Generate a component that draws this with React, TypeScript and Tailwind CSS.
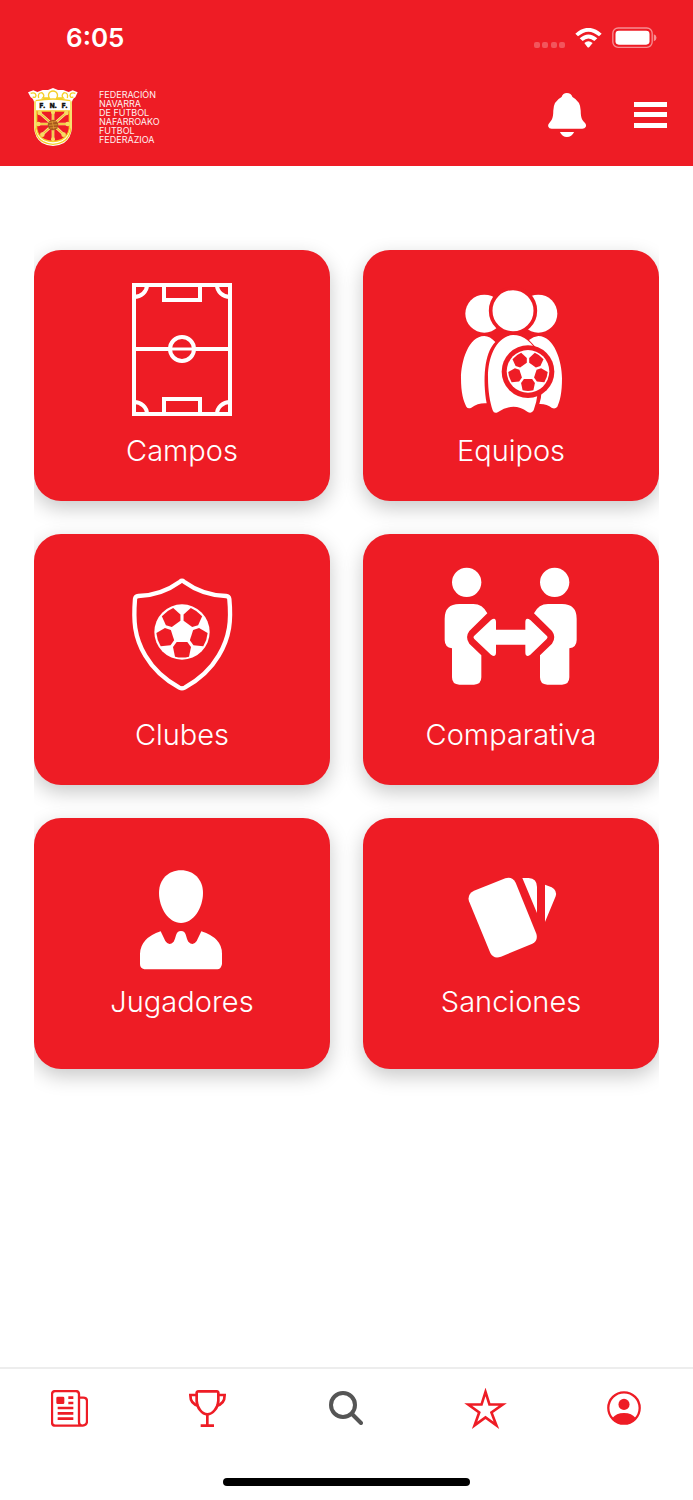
import { PropsWithChildren, ReactNode } from 'react';
import { twMerge } from 'tailwind-merge';

type IconProps = PropsWithChildren<{
  viewBox: string;
  className?: string;
}>;

function Icon({ viewBox, className = '', children }: IconProps) {
  return (
    <svg
      viewBox={viewBox}
      fill="currentColor"
      aria-hidden="true"
      className={twMerge('block shrink-0', className)}
    >
      {children}
    </svg>
  );
}

// Football centred on the origin, radius 83
function Ball({ transform }: { transform: string }) {
  return (
    <g transform={transform}>
      <circle r="83" fill="#fff" />
      {[0, 72, 144, 216, 288].map((angle) => (
        <path
          key={angle}
          d="M-16 30H16L27 45L21 74Q0 79 -21 74L-27 45Z"
          fill="#ee1c25"
          transform={`rotate(${angle})`}
        />
      ))}
    </g>
  );
}

function PitchIcon() {
  return (
    <Icon viewBox="0 0 134 134" className="size-[134px]">
      <g fill="none" stroke="currentColor" strokeWidth="4">
        <path d="M19 2H115V131H19ZM19 66H55M79 66H115" />
        <path d="M55 66H79" strokeWidth="3" />
        <circle cx="67" cy="66" r="12" />
        <path d="M49 2V17H85V2M49 131V116H85V131" />
        <path d="M32 2A13 12 0 0 1 19 14M102 2A13 12 0 0 0 115 14M32 131A13 12 0 0 0 19 119M102 131A13 12 0 0 1 115 119" />
      </g>
    </Icon>
  );
}

function TeamIcon() {
  return (
    <Icon viewBox="12 39 402 402" className="size-[134px]">
      <circle cx="133" cy="131" r="57" />
      <circle cx="295" cy="131" r="57" />
      <circle cx="219" cy="122" r="67" stroke="#ee1c25" strokeWidth="11" />
      <path d="M133 198C85 198 63 275 63 325C63 368 70 393 79 410Q84 418 94 413Q115 398 140 400C128 330 132 250 166 216Q150 198 133 198Z" />
      <path d="M295 198C343 198 366 275 366 325C366 368 360 393 352 410Q346 418 336 414Q320 401 298 402Q304 385 304 370V250L267 210Q280 199 295 198Z" />
      <path d="M219 195C170 198 144 260 144 320C144 365 150 395 158 421Q162 432 173 427Q220 395 262 425Q274 433 281 421Q290 397 293 370L300 260Q267 195 219 195Z" />
      <circle cx="264" cy="305" r="79" fill="#ee1c25" />
      <Ball transform="translate(264 304) scale(.77)" />
    </Icon>
  );
}

function ShieldIcon() {
  return (
    <Icon viewBox="15 21 402 402" className="size-[134px]">
      <path
        d="M210 65Q216 60 222 65C255 89 295 106 348 108Q357 109 358 117C364 180 360 230 326 287C298 335 262 362 224 383Q216 387 208 383C170 362 134 335 106 287C72 230 70 180 75 117Q76 109 85 108C138 106 177 89 210 65Z"
        fill="none"
        stroke="currentColor"
        strokeWidth="13"
        strokeLinejoin="round"
      />
      <Ball transform="translate(216 216)" />
    </Icon>
  );
}

function CompareIcon() {
  const person =
    'M118 162H160Q188 162 202 190L148 243Q134 262 148 281L184 316V382Q184 404 162 404H118Q96 404 96 382V295Q74 292 74 270V206Q74 162 118 162Z';
  return (
    <Icon viewBox="72 51 402 402" className="size-[134px]">
      <circle cx="140" cy="97" r="44" />
      <circle cx="404" cy="97" r="44" />
      <path d={person} />
      <path d={person} transform="translate(544 0) scale(-1 1)" />
      <path d="M163 257L213 210Q228 200 228 217V239H316V217Q316 200 331 210L380 257Q385 262 380 267L331 314Q316 324 316 307V284H228V307Q228 324 213 314L163 267Q158 262 163 257Z" />
    </Icon>
  );
}

function PlayerIcon() {
  return (
    <Icon viewBox="96 55 300 300" className="size-25 overflow-visible">
      <path d="M243 62C282 62 309 90 309 130C309 175 280 220 243 220C206 220 177 175 177 130C177 90 204 62 243 62Z" />
      <path d="M182 245L196 274Q207 291 221 276C229 264 226 244 243 244C260 244 257 264 265 276Q279 291 290 274L304 245Q366 265 366 312V343Q363 359 352 359H133Q120 356 120 343V312Q122 265 182 245Z" />
    </Icon>
  );
}

function CardsIcon() {
  return (
    <Icon viewBox="63 25 300 300" className="size-25">
      <path d="M102 93L196 56Q217 50 227 69L289 222Q295 243 277 252L183 291Q161 299 151 280L87 125Q81 104 102 93Z" />
      <path d="M247 55H266Q291 57 291 82V160ZM315 75L335 83Q352 93 347 110L315 187Z" />
    </Icon>
  );
}

function Crest() {
  return (
    <Icon viewBox="84 54 150 177" className="h-[59px] w-[50px]">
      <path
        d="M84 67L100 61L112 66L128 60H144L159 54L174 60H190L206 66L218 61L233 67L226 82Q214 88 216 105V172Q214 204 192 219Q159 237 126 219Q104 204 102 172V105Q104 88 92 82Z"
        fill="#fff"
      />
      <g fill="none" stroke="#f5cf28" strokeWidth="4">
        <path d="M92 70Q106 66 108 76Q106 86 98 80M226 70Q212 66 210 76Q212 86 220 80M116 84Q112 68 126 68Q136 76 128 84H148Q142 74 150 66Q159 60 168 66Q176 74 170 84H190Q182 76 192 68Q206 68 202 84M107 92Q159 82 211 92" />
        <path d="M105 94V172Q107 202 129 215Q159 231 189 215Q211 202 213 172V94" />
      </g>
      <g
        fill="#111"
        stroke="#111"
        textAnchor="middle"
        className="font-['Inter',sans-serif] text-[19px] font-black"
      >
        <text x="127" y="114">F.</text>
        <text x="160" y="114">N.</text>
        <text x="194" y="114">F.</text>
      </g>
      <path d="M108 121H210V176Q207 198 186 211Q159 223 132 211Q111 198 108 176Z" fill="#f5cf28" />
      <path d="M112 125H206V176Q203 196 184 207Q159 218 134 207Q115 196 112 176Z" fill="#ee1c25" />
      <path
        d="M119 129L159 164L199 129M115 162H203M159 125V210M126 194L159 164L192 194"
        fill="none"
        stroke="#fbe9a0"
        strokeWidth="8"
      />
      <path
        d="M119 129L159 164L199 129M115 162H203M159 125V210M126 194L159 164L192 194"
        fill="none"
        stroke="#efc02c"
        strokeWidth="4"
      />
      <g fill="#f7dc62">
        <circle cx="119" cy="129" r="7" />
        <circle cx="159" cy="127" r="6" />
        <circle cx="199" cy="129" r="7" />
        <circle cx="115" cy="162" r="7" />
        <circle cx="203" cy="162" r="7" />
        <circle cx="127" cy="194" r="7" />
        <circle cx="191" cy="194" r="7" />
        <circle cx="159" cy="208" r="6" />
      </g>
      <circle cx="159" cy="165" r="16" fill="#a8591c" />
      <path d="M147 158L170 154M147 166L172 164M150 174L170 172M156 152L162 178" stroke="#e8a43a" strokeWidth="2" />
    </Icon>
  );
}

function StatusBar() {
  return (
    <div className="flex h-19 items-center justify-between pr-9 pl-[66px]">
      <span className="text-[26px] leading-8 font-semibold">6:05</span>
      <div className="flex items-center gap-[10px]">
        <Icon viewBox="0 0 31 22" className="h-[22px] w-[31px] opacity-25">
          <rect x="0" y="15" width="6" height="6" rx="2" />
          <rect x="8" y="15" width="6" height="6" rx="2" />
          <rect x="17" y="15" width="6" height="6" rx="2" />
          <rect x="25" y="15" width="6" height="6" rx="2" />
        </Icon>
        <Icon viewBox="226 84 81 63" className="h-[21px] w-[27px]">
          <path d="M227 101Q266 66 306 101L298 109Q266 81 235 109ZM240 115Q266 92 293 115L284 123Q266 108 249 123ZM254 129Q266 119 279 129L269 141Q266 144 263 141Z" />
        </Icon>
        <Icon viewBox="337 84 134 63" className="h-[21px] w-[45px] overflow-visible">
          <rect x="339" y="84" width="118" height="58" rx="16" fill="none" stroke="currentColor" strokeWidth="4" opacity=".5" />
          <rect x="347" y="92" width="102" height="42" rx="10" />
          <path d="M462 103Q470 106 470 113Q470 121 462 124Z" opacity=".5" />
        </Icon>
      </div>
    </div>
  );
}

function AppBar() {
  return (
    <div className="flex h-[90px] items-center justify-between pr-[26px] pb-3 pl-7">
      <a href="#inicio" className="flex items-center gap-[21px] pt-1">
        <Crest />
        <span className="text-[9px] leading-[9px] text-red-50">
          FEDERACIÓN
          <br />
          NAVARRA
          <br />
          DE FÚTBOL
          <br />
          NAFARROAKO
          <br />
          FUTBOL
          <br />
          FEDERAZIOA
        </span>
      </a>
      <div className="flex items-center gap-12">
        <button type="button" aria-label="Notificaciones">
          <Icon viewBox="143 279 115 133" className="h-11 w-[38px]">
            <path d="M200 279Q213 279 217 291Q242 304 242 333C242 356 247 362 255 370Q260 376 257 382Q254 387 247 387H154Q146 387 144 381Q142 375 147 370C154 362 159 356 159 333Q159 304 184 291Q188 279 200 279Z" />
            <path d="M179 397H222Q215 412 200 412Q186 412 179 397Z" />
          </Icon>
        </button>
        <button type="button" aria-label="Menú">
          <Icon viewBox="0 0 33 26" className="h-[26px] w-[33px]">
            <path d="M0 0H33V5H0ZM0 10H33V15H0ZM0 21H33V26H0Z" />
          </Icon>
        </button>
      </div>
    </div>
  );
}

type TileProps = {
  label: string;
  href: string;
  icon: ReactNode;
};

const tiles: TileProps[] = [
  { label: 'Campos', href: '#campos', icon: <PitchIcon /> },
  { label: 'Equipos', href: '#equipos', icon: <TeamIcon /> },
  { label: 'Clubes', href: '#clubes', icon: <ShieldIcon /> },
  { label: 'Comparativa', href: '#comparativa', icon: <CompareIcon /> },
  { label: 'Jugadores', href: '#jugadores', icon: <PlayerIcon /> },
  { label: 'Sanciones', href: '#sanciones', icon: <CardsIcon /> },
];

function Tile({ label, href, icon }: TileProps) {
  return (
    <a
      href={href}
      className="flex h-[251px] flex-col items-center justify-center gap-4 rounded-[27px] bg-[#ee1c25] text-white shadow-[0_7px_20px_rgba(0,0,0,0.22)]"
    >
      {icon}
      <span className="text-[29px] leading-9 font-light">{label}</span>
    </a>
  );
}

const tabs = [
  {
    label: 'Noticias',
    href: '#noticias',
    icon: (
      <Icon viewBox="152 90 111 111" className="size-[37px]">
        <path
          d="M243 197H165Q155 197 155 187V103Q155 93 165 93H226Q236 93 236 103V187Q236 197 247 197Q260 195 260 184V124Q260 113 249 113H236"
          fill="none"
          stroke="currentColor"
          strokeWidth="7"
        />
        <rect x="168" y="110" width="24" height="22" rx="4" />
        <path d="M204 113H219M204 129H219M172 144H219M172 160H219M172 176H219" stroke="currentColor" strokeWidth="8" />
      </Icon>
    ),
  },
  {
    label: 'Competiciones',
    href: '#competiciones',
    icon: (
      <Icon viewBox="567 90 111 111" className="size-[37px]">
        <g fill="none" stroke="currentColor" strokeWidth="8">
          <path d="M596 94H650Q656 94 655 101V122C655 142 638 163 622 163C606 163 590 142 590 122V101Q589 94 596 94Z" />
          <path d="M589 105H571Q571 132 595 137M655 105H674Q674 132 650 137M622 162V197M602 197H642" />
        </g>
      </Icon>
    ),
  },
  {
    label: 'Buscar',
    href: '#buscar',
    active: true,
    icon: (
      <Icon viewBox="0 0 34 34" className="size-[34px]">
        <g fill="none" stroke="currentColor" strokeWidth="4" strokeLinecap="round">
          <circle cx="14" cy="14" r="12" />
          <path d="M23 23L32 32" />
        </g>
      </Icon>
    ),
  },
  {
    label: 'Favoritos',
    href: '#favoritos',
    icon: (
      <Icon viewBox="370 82 128 124" className="h-[41px] w-[43px]">
        <path
          d="M434 94L446 132H486L452 156L467 195L434 171L401 195L415 156L382 132H422Z"
          fill="none"
          stroke="currentColor"
          strokeWidth="8"
          strokeMiterlimit="10"
        />
      </Icon>
    ),
  },
  {
    label: 'Perfil',
    href: '#perfil',
    icon: (
      <Icon viewBox="798 93 104 104" className="size-[34px]">
        <circle cx="850" cy="145" r="48" fill="none" stroke="currentColor" strokeWidth="7" />
        <circle cx="850" cy="134" r="17" />
        <path d="M814 176Q826 160 850 160Q874 160 886 176Q872 194 850 194Q828 194 814 176Z" />
      </Icon>
    ),
  },
];

function TabBar() {
  return (
    <footer className="border-t-2 border-[#ededed] bg-white">
      <nav className="grid h-[78px] grid-cols-5">
        {tabs.map((tab) => (
          <a
            key={tab.label}
            href={tab.href}
            aria-label={tab.label}
            className={twMerge(
              'flex items-center justify-center text-[#ee1c25]',
              tab.active && 'text-[#555555]',
            )}
          >
            {tab.icon}
          </a>
        ))}
      </nav>
      <div className="flex justify-center pt-[31px] pb-[14px]">
        <div className="h-2 w-[247px] rounded-full bg-black" />
      </div>
    </footer>
  );
}

export default function App() {
  return (
    <div className="flex min-h-screen flex-col bg-white font-['Inter','Liberation_Sans',sans-serif]">
      <header className="bg-[#ee1c25] text-white">
        <StatusBar />
        <AppBar />
      </header>
      <main className="flex-1 px-[34px] pt-13">
        <div className="grid grid-cols-2 gap-[33px] overflow-hidden py-8">
          {tiles.map((tile) => (
            <Tile key={tile.label} {...tile} />
          ))}
        </div>
      </main>
      <TabBar />
    </div>
  );
}
